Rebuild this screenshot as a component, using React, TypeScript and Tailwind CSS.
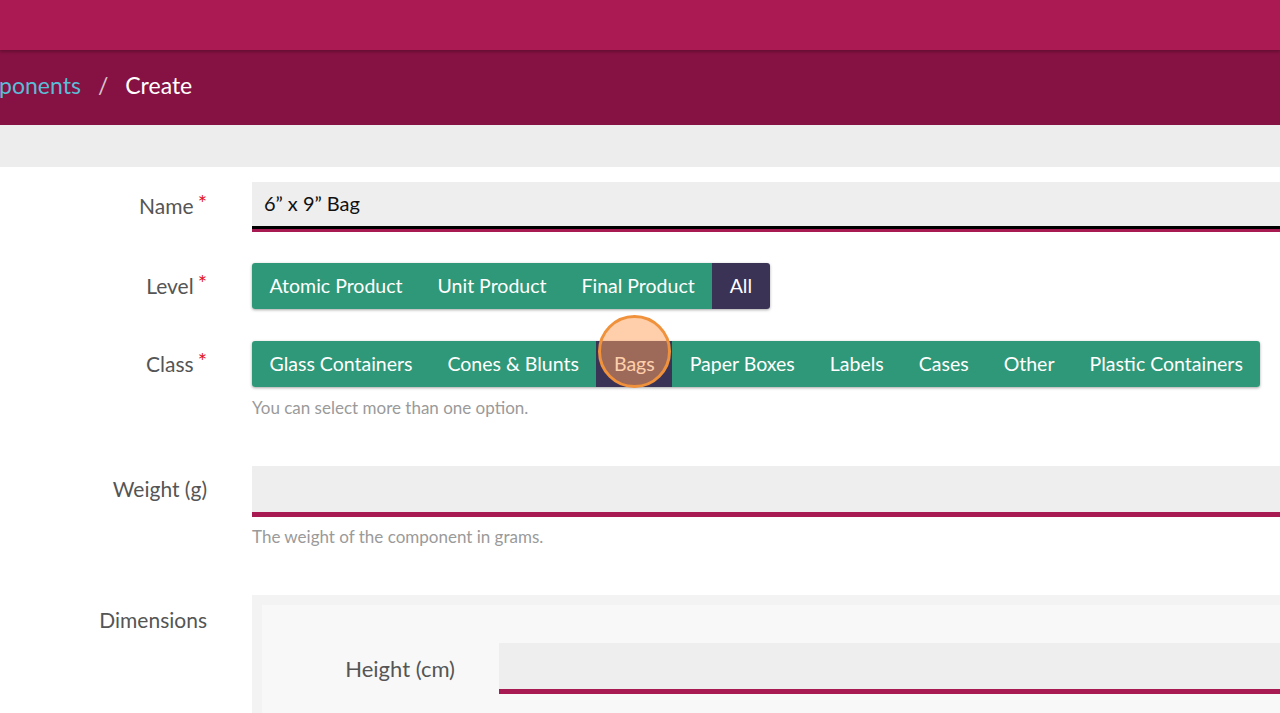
import { useState } from "react";

const levels = ["Atomic Product", "Unit Product", "Final Product", "All"];
const classes = [
    "Glass Containers",
    "Cones & Blunts",
    "Bags",
    "Paper Boxes",
    "Labels",
    "Cases",
    "Other",
    "Plastic Containers",
];

function ButtonGroup({ items, selected }: { items: string[]; selected: string[] }) {
    return (
        <div className="inline-flex rounded-[3px] overflow-hidden shadow-[0_1px_3px_rgba(0,0,0,0.35)]">
            {items.map((item) => (
                <button
                    key={item}
                    className={`h-[46px] px-[17.5px] text-[19.5px] text-white whitespace-nowrap ${selected.includes(item) ? "bg-[#3a3356]" : "bg-[#2f9878]"}`}
                >
                    {item}
                </button>
            ))}
        </div>
    );
}

function Label({ text, required }: { text: string; required?: boolean }) {
    return (
        <div className="w-[207px] shrink-0 text-right text-[21px] text-[#555]">
            {text}
            {required && <span className="text-[#e0141e] ml-[4px] text-[22px] align-top leading-[26px]">*</span>}
        </div>
    );
}

export default function App() {
    const [name, setName] = useState("6” x 9” Bag");

    return (
        <div className="min-h-screen w-full bg-white overflow-hidden" style={{ fontFamily: "Lato, 'Open Sans', sans-serif" }}>
            <div className="h-[50px] bg-[#ab1a53] shadow-[0_2px_3px_rgba(0,0,0,0.25)] relative z-10" />
            <div className="h-[75px] bg-[#861243] flex items-center pb-[5px] text-[23px] whitespace-nowrap">
                <span className="text-[#5bbcd6] ml-[-48px]">Components</span>
                <span className="text-[#d8c4cc] mx-[17px]">/</span>
                <span className="text-white">Create</span>
            </div>
            <div className="h-[42px] bg-[#ededed]" />

            <div className="pt-[15px]">
                {/* Name */}
                <div className="flex items-center">
                    <Label text="Name" required />
                    <div className="ml-[45px] flex-1">
                        <input
                            value={name}
                            onChange={(e) => setName(e.target.value)}
                            className="w-full h-[47px] bg-[#eeeeee] px-[12px] pb-[3px] text-[20px] text-[#111] outline-none border-b-[3px] border-black shadow-[0_3px_0_#a81b52]"
                        />
                    </div>
                </div>

                {/* Level */}
                <div className="flex items-center mt-[34px]">
                    <Label text="Level" required />
                    <div className="ml-[45px]">
                        <ButtonGroup items={levels} selected={["All"]} />
                    </div>
                </div>

                {/* Class */}
                <div className="flex items-start mt-[32px]">
                    <div className="h-[46px] flex items-center">
                        <Label text="Class" required />
                    </div>
                    <div className="ml-[45px]">
                        <div className="relative">
                            <ButtonGroup items={classes} selected={["Bags"]} />
                            <div className="absolute left-[346px] top-[-26px] w-[73px] h-[73px] rounded-full border-[3px] border-[#f0913c] bg-[rgba(255,160,90,0.5)] pointer-events-none" />
                        </div>
                        <p className="mt-[8px] text-[17px] text-[#9a9a9a]">You can select more than one option.</p>
                    </div>
                </div>

                {/* Weight */}
                <div className="flex items-start mt-[45px]">
                    <div className="h-[46px] flex items-center">
                        <Label text="Weight (g)" />
                    </div>
                    <div className="ml-[45px] flex-1">
                        <div className="h-[51px] bg-[#eeeeee] border-b-[5px] border-[#a81b52]" />
                        <p className="mt-[7px] text-[17px] text-[#9a9a9a]">The weight of the component in grams.</p>
                    </div>
                </div>

                {/* Dimensions */}
                <div className="flex items-start mt-[46px]">
                    <div className="pt-[9px]">
                        <Label text="Dimensions" />
                    </div>
                    <div className="ml-[45px] flex-1 bg-[#f3f3f3] pt-[10px] pl-[10px]">
                        <div className="bg-[#f8f8f8] pt-[38px] pb-[20px] flex items-center">
                            <div className="w-[237px] shrink-0 text-right pr-[44px] text-[22px] text-[#555]">Height (cm)</div>
                            <div className="flex-1 h-[51px] bg-[#eeeeee] border-b-[5px] border-[#a81b52]" />
                        </div>
                    </div>
                </div>
            </div>
        </div>
    );
}
